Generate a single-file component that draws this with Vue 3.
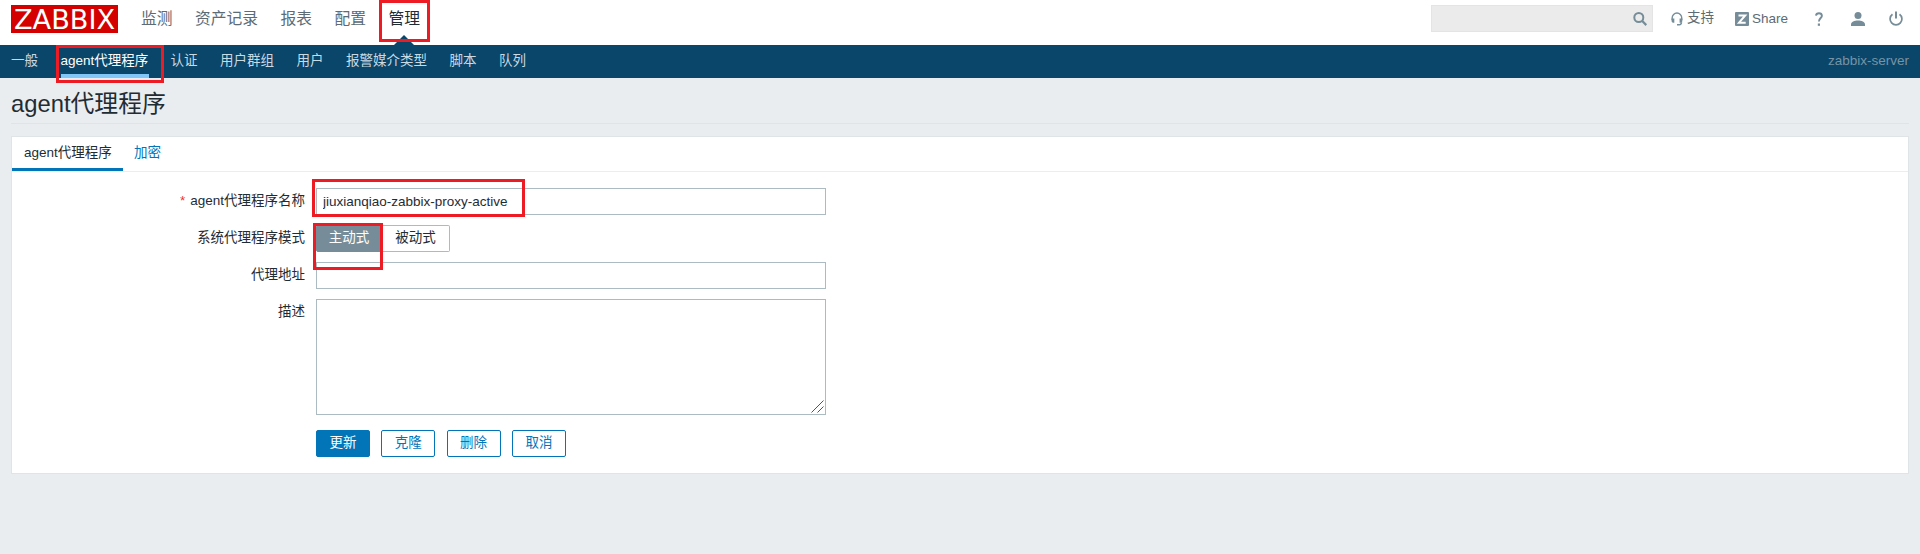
<script setup>
import { ref } from 'vue'

const mainMenu = ['监测', '资产记录', '报表', '配置', '管理']
const subMenu = ['一般', 'agent代理程序', '认证', '用户群组', '用户', '报警媒介类型', '脚本', '队列']
const actions = ['更新', '克隆', '删除', '取消']
const search = ref('')
const name = ref('jiuxianqiao-zabbix-proxy-active')
const address = ref('')
const description = ref('')
const mode = ref('主动式')
</script>

<template>
  <div class="page">
    <header class="top">
      <svg class="logo" width="107" height="28" viewBox="0 0 107 28">
        <rect width="107" height="28" fill="#d40000" />
        <text x="3" y="23.6" textLength="101" lengthAdjust="spacingAndGlyphs">ZABBIX</text>
      </svg>
      <nav class="main-nav">
        <a v-for="item in mainMenu" :key="item" :class="{ selected: item === '管理' }">{{ item }}</a>
      </nav>
      <div class="search">
        <input v-model="search" />
        <svg width="16" height="16" viewBox="0 0 16 16" fill="none" stroke="#768d99">
          <circle cx="6.8" cy="6.500" r="4.500" stroke-width="2" />
          <path d="M10 9.800 14.300 14.100" stroke-width="2.200" />
        </svg>
      </div>
      <a class="support">
        <svg width="12" height="14" viewBox="0 0 13 15">
          <path d="M1.300 8.500V6.200a5.100 5.100 0 0 1 10.300 0v2.300" fill="none" stroke="#768d99" stroke-width="1.500" />
          <path d="M.6 7h3v4.600H2.400Q.6 11.600.6 9.800ZM9.300 7h3v2.800q0 1.800-1.800 1.800H9.300Z" fill="#768d99" />
          <path d="M11.400 11q0 2.500-2.500 2.800H6.500" fill="none" stroke="#768d99" stroke-width="1.500" />
        </svg>
        <span>支持</span>
      </a>
      <a class="share">
        <svg width="14" height="14" viewBox="0 0 14 14">
          <rect width="14" height="14" rx="1" fill="#768d99" />
          <path d="M3.500 3.500h6.700L4 10.700h6.700" fill="none" stroke="#fff" stroke-width="2" />
        </svg>
        <span>Share</span>
      </a>
      <svg class="help" width="8" height="15" viewBox="0 0 8 15">
        <path d="M1 3.600Q1.200 1.200 4 1.200T6.900 3.700C6.900 5.900 3.900 6.300 3.900 9.600" fill="none" stroke="#768d99" stroke-width="1.900" />
        <rect x="2.800" y="11.500" width="2.200" height="2.300" fill="#768d99" />
      </svg>
      <svg class="user" width="14" height="14" viewBox="0 0 14 14" fill="#768d99">
        <circle cx="7" cy="3.500" r="3.500" />
        <path d="M0 14v-1.500C0 9.600 3.500 8.400 7 8.400s7 1.200 7 4.100V14Z" />
      </svg>
      <svg class="power" width="14" height="15" viewBox="0 0 14 15" fill="none" stroke="#768d99">
        <path d="M3.500 3.200a5.900 5.900 0 1 0 7 0" stroke-width="1.700" />
        <path d="M7 .5v7" stroke-width="2" />
      </svg>
    </header>

    <nav class="sub-nav">
      <a v-for="item in subMenu" :key="item" :class="{ selected: item === 'agent代理程序' }">{{ item }}</a>
      <span class="server">zabbix-server</span>
    </nav>

    <h1>agent代理程序</h1>

    <main class="panel">
      <div class="tabs">
        <a class="selected">agent代理程序</a>
        <a>加密</a>
      </div>
      <form class="form" @submit.prevent>
        <label><i>*</i>agent代理程序名称</label>
        <div class="field">
          <input v-model="name" />
          <span class="mark mark-name"></span>
        </div>
        <label>系统代理程序模式</label>
        <div class="field segmented">
          <span v-for="m in ['主动式', '被动式']" :key="m" :class="{ on: m === mode }" @click="mode = m">{{ m }}</span>
          <b class="mark mark-mode"></b>
        </div>
        <label>代理地址</label>
        <div class="field"><input v-model="address" /></div>
        <label>描述</label>
        <div class="field area">
          <textarea v-model="description"></textarea>
          <svg class="grip" width="13" height="13" viewBox="0 0 13 13" stroke="#555" stroke-width="1">
            <path d="M.5 12.500 12.500.5M6.500 12.500l6-6" />
          </svg>
        </div>
        <div class="buttons">
          <button v-for="(a, i) in actions" :key="a" type="button" :class="{ primary: i === 0 }">{{ a }}</button>
        </div>
      </form>
    </main>

    <span class="mark mark-admin"></span>
    <span class="mark mark-proxies"></span>
  </div>
</template>

<style>
body {
  background: #e9edf0;
}
</style>

<style scoped>
.page, .page * {
  box-sizing: border-box;
}
.page {
  position: relative;
  height: 554px;
  overflow: hidden;
  background: #e9edf0;
  color: #1f2c33;
  font: 13.5px "Liberation Sans", "Noto Sans CJK SC", sans-serif;
}
svg {
  display: block;
  flex: none;
}
a, label, span {
  white-space: nowrap;
}
.top {
  display: flex;
  align-items: flex-start;
  height: 45px;
  padding: 5px 17px 0 11px;
  background: #fff;
  color: #5c6b74;
}
.logo {
  overflow: visible;
}
.logo text {
  font: 26px "DejaVu Sans", sans-serif;
  fill: #fff;
}
.main-nav {
  display: flex;
  gap: 22.5px;
  margin-left: 23px;
  font-size: 15.75px;
  line-height: 28px;
}
.main-nav a {
  position: relative;
  height: 40px;
}
.main-nav .selected {
  color: #1f2c33;
}
.main-nav .selected::after {
  content: "";
  position: absolute;
  left: 50%;
  bottom: 0;
  margin-left: -10px;
  border: solid transparent;
  border-width: 0 10px 10px;
  border-bottom-color: #0a466a;
}
.search {
  display: flex;
  align-items: center;
  width: 222px;
  height: 27px;
  margin-left: auto;
  padding-right: 4px;
  border: 1px solid #e4e4e4;
  background: #ebebeb;
}
.search input {
  flex: 1;
  min-width: 0;
  border: 0;
  outline: 0;
  background: none;
}
.support, .share {
  display: flex;
  align-items: center;
  height: 27px;
}
.support {
  width: 43px;
  gap: 4px;
  margin-left: 18px;
}
.support span {
  line-height: 25px;
  height: 27px;
}
.share {
  width: 53px;
  gap: 3px;
  margin-left: 21px;
}
.help {
  margin: 7px 0 0 27px;
}
.user {
  margin: 7px 0 0 28px;
}
.power {
  margin: 6px 0 0 24px;
}
.sub-nav {
  display: flex;
  gap: 22.5px;
  height: 33px;
  padding: 0 11px;
  background: #0a466a;
  color: #c9dae3;
  line-height: 32px;
}
.sub-nav .selected {
  width: 88px;
  margin-right: -0.6px;
  border-bottom: 4px solid #81c6f7;
  color: #fff;
}
.server {
  margin-left: auto;
  color: #7694a5;
}
h1 {
  height: 46px;
  margin: 0 11px;
  border-bottom: 1px solid #dfe4e7;
  font-size: 23.8px;
  font-weight: 400;
  line-height: 52px;
}
.panel {
  height: 338px;
  margin: 12px 11px 0;
  border: 1px solid #dfe4e7;
  background: #fff;
}
.tabs {
  display: flex;
  height: 35px;
  border-bottom: 1px solid #ebeef0;
  line-height: 32px;
}
.tabs a {
  height: 34px;
  padding: 0 11px;
  color: #0275b8;
}
.tabs .selected {
  width: 111px;
  padding-left: 12px;
  border-bottom: 3px solid #0275b8;
  color: #1f2c33;
}
.form {
  display: grid;
  grid-template-columns: 293px 510px;
  grid-template-rows: 27px 27px 27px 116px 27px;
  column-gap: 11px;
  row-gap: 10px;
  padding-top: 16px;
  line-height: 26px;
}
.form label {
  text-align: right;
}
.form i {
  margin-right: 5px;
  color: #e33734;
  font-style: normal;
}
.field {
  position: relative;
}
.field input, .field textarea {
  display: block;
  width: 100%;
  height: 100%;
  margin: 0;
  padding: 0 6px 1px;
  border: 1px solid #acbbc2;
  border-radius: 0;
  outline: 0;
  background: #fff;
  color: #1f2c33;
  font: inherit;
  resize: none;
}
.grip {
  position: absolute;
  right: 2px;
  bottom: 2px;
}
.segmented {
  display: flex;
  z-index: 1;
}
.segmented span {
  width: 68px;
  border: 1px solid #acbbc2;
  border-left: 0;
  border-radius: 0 2px 2px 0;
  line-height: 24px;
  text-align: center;
}
.segmented .on {
  width: 66px;
  border: 1px solid #768d99;
  border-radius: 2px 0 0 2px;
  background: #768d99;
  color: #fff;
}
.buttons {
  display: flex;
  grid-column: 2;
  gap: 11.3px;
  margin-top: 5px;
}
.buttons button {
  width: 54px;
  height: 27px;
  padding: 0 0 1px;
  border: 1px solid #0275b8;
  border-radius: 2px;
  background: #fff;
  color: #0275b8;
  font: inherit;
  line-height: 24px;
}
.buttons .primary {
  background: #0275b8;
  color: #fff;
}
.mark {
  position: absolute;
  border: 3px solid #ed1c24;
  pointer-events: none;
}
.mark-admin {
  left: 379px;
  top: 0;
  width: 51px;
  height: 42px;
}
.mark-proxies {
  left: 56px;
  top: 45px;
  width: 108px;
  height: 38px;
}
.mark-name {
  left: -4px;
  top: -9px;
  width: 213px;
  height: 38px;
}
.mark-mode {
  left: -3px;
  top: -2px;
  width: 70px;
  height: 47px;
}
</style>
